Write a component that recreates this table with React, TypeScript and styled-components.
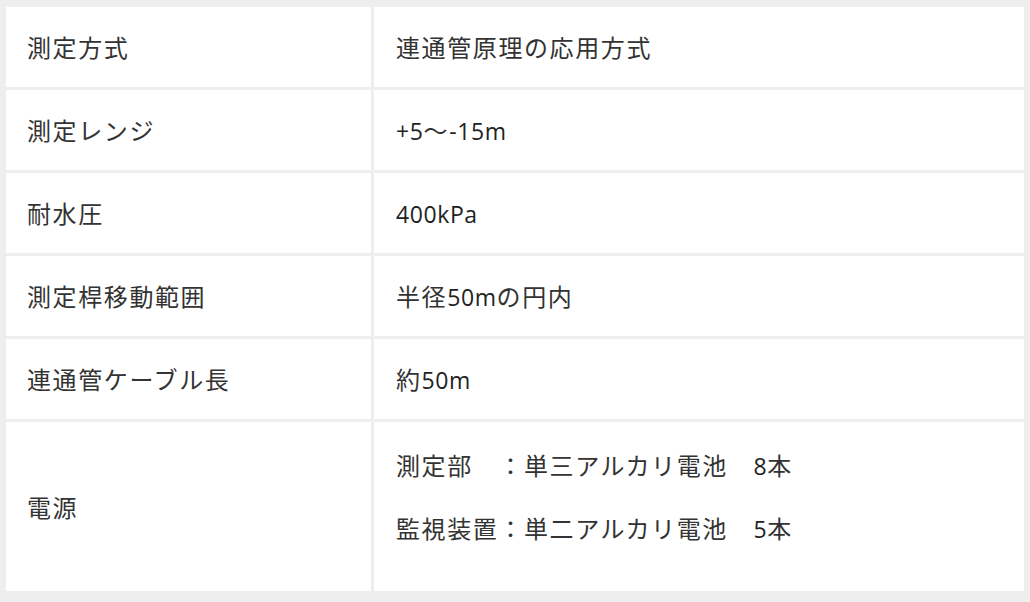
import React from "react";
import styled, { createGlobalStyle } from "styled-components";

const GlobalStyle = createGlobalStyle`
  html, body {
    margin: 0;
    padding: 0;
    background: #eeeeee;
  }
`;

const Table = styled.div`
  display: grid;
  grid-template-columns: 365px 650px;
  gap: 3px;
  padding: 7px 6px 11px;
  background: #eeeeee;
  font-family: "Noto Sans CJK JP", sans-serif;
  font-size: 24px;
  letter-spacing: 1.6px;
  color: #333;
`;

const Cell = styled.div<{ $value?: boolean }>`
  display: flex;
  flex-direction: column;
  justify-content: center;
  box-sizing: border-box;
  min-height: 80px;
  background: #fff;
  padding: 0 20px 0 ${(p) => (p.$value ? "22px" : "21px")};
  line-height: 44px;
  white-space: nowrap;
`;

const Line = styled.div`
  height: 44px;
  line-height: 44px;
`;

const MultiCell = styled(Cell)`
  justify-content: flex-start;
  padding-top: 21px;
  padding-bottom: 22px;
`;

const Para = styled.p`
  margin: 0 0 20px;
  height: 43px;
  line-height: 43px;
`;

const Lat = styled.span`
  font-family: "Open Sans", sans-serif;
  font-size: 23px;
  line-height: 1;
  letter-spacing: 0.6px;
  color: #222;
`;

type Row = { label: string; value: React.ReactNode };

const rows: Row[] = [
  { label: "測定方式", value: "連通管原理の応用方式" },
  {
    label: "測定レンジ",
    value: (
      <>
        <Lat>+5</Lat>〜<Lat>-15m</Lat>
      </>
    ),
  },
  { label: "耐水圧", value: <Lat>400kPa</Lat> },
  {
    label: "測定桿移動範囲",
    value: (
      <>
        半径<Lat>50m</Lat>の円内
      </>
    ),
  },
  {
    label: "連通管ケーブル長",
    value: (
      <>
        約<Lat>50m</Lat>
      </>
    ),
  },
];

export default function App() {
  return (
    <>
      <GlobalStyle />
      <Table>
        {rows.map((r) => (
          <React.Fragment key={r.label}>
            <Cell>
              <Line>{r.label}</Line>
            </Cell>
            <Cell $value>
              <Line>{r.value}</Line>
            </Cell>
          </React.Fragment>
        ))}
        <Cell>
          <Line>電源</Line>
        </Cell>
        <MultiCell $value>
          <Para>
            測定部　：単三アルカリ電池　<Lat>8</Lat>本
          </Para>
          <Para>
            監視装置：単二アルカリ電池　<Lat>5</Lat>本
          </Para>
        </MultiCell>
      </Table>
    </>
  );
}
